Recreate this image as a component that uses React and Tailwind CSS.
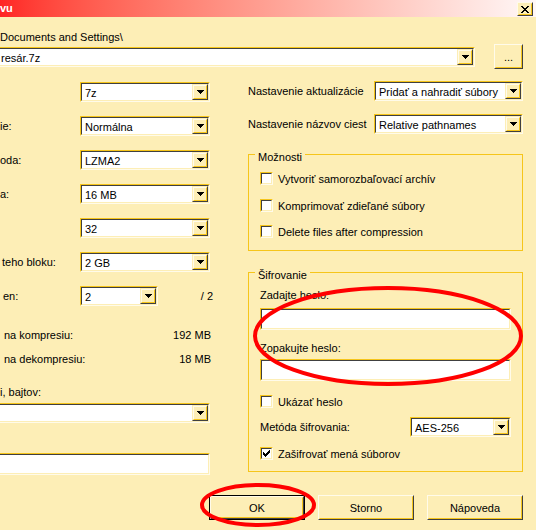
import React from "react";

const box1 =
  "border border-t-[#f6c51a] border-l-[#f6c51a] border-b-[#fffbea] border-r-[#fffbea]";
const box2 =
  "border border-t-[#404040] border-l-[#404040] border-b-[#fdeeb6] border-r-[#fdeeb6]";
const raise1 =
  "border border-t-[#fdeeb6] border-l-[#fdeeb6] border-b-[#404040] border-r-[#404040]";
const raise2 =
  "border border-t-[#fffbea] border-l-[#fffbea] border-b-[#f6c51a] border-r-[#f6c51a]";

function Sunken({ className = "", children }) {
  return (
    <div className={`${box1} ${className}`}>
      <div className={`${box2} bg-white h-full w-full flex items-center justify-center`}>
        {children}
      </div>
    </div>
  );
}

function Arrow() {
  return (
    <svg width="7" height="4" viewBox="0 0 7 4" shapeRendering="crispEdges">
      <rect x="0" y="0" width="7" height="1" fill="#000" />
      <rect x="1" y="1" width="5" height="1" fill="#000" />
      <rect x="2" y="2" width="3" height="1" fill="#000" />
      <rect x="3" y="3" width="1" height="1" fill="#000" />
    </svg>
  );
}

function DropBtn() {
  return (
    <div className={`${raise1} h-full w-[16px] shrink-0`}>
      <div className={`${raise2} h-full w-full bg-[#fdeeb6] flex items-center justify-center`}>
        <Arrow />
      </div>
    </div>
  );
}

function Combo({ text, className = "" }) {
  return (
    <Sunken className={className}>
      <div className="flex-1 min-w-0 h-full pl-[3px] pt-[2px] flex items-center whitespace-nowrap overflow-hidden">
        {text}
      </div>
      <DropBtn />
    </Sunken>
  );
}

function CheckMark() {
  const px = [
    [6, 0, 1],
    [5, 1, 2],
    [0, 2, 1],
    [4, 2, 3],
    [0, 3, 2],
    [3, 3, 3],
    [0, 4, 5],
    [1, 5, 3],
    [2, 6, 1],
  ];
  return (
    <svg width="7" height="7" viewBox="0 0 7 7" shapeRendering="crispEdges">
      {px.map(([x, y, w], i) => (
        <rect key={i} x={x} y={y} width={w} height="1" fill="#000" />
      ))}
    </svg>
  );
}

function CheckRow({ label, checked = false, className = "" }) {
  return (
    <div className={`h-[13px] flex items-center whitespace-nowrap ${className}`}>
      <Sunken className="w-[13px] h-[13px] shrink-0">{checked && <CheckMark />}</Sunken>
      <span className="ml-[5px]">{label}</span>
    </div>
  );
}

function Btn({ children, className = "", def = false }) {
  const core = (
    <div className="h-full w-full bg-[#fdeeb6] border border-t-[#fffbea] border-l-[#fffbea] border-b-[#404040] border-r-[#404040]">
      <div className="h-full w-full border border-t-[#fdeeb6] border-l-[#fdeeb6] border-b-[#f6c51a] border-r-[#f6c51a] flex items-center justify-center">
        {children}
      </div>
    </div>
  );
  return def ? (
    <div className={`border border-black ${className}`}>{core}</div>
  ) : (
    <div className={className}>{core}</div>
  );
}

function Group({ title, className = "", children }) {
  return (
    <fieldset className={`border border-[#f6c51a] p-0 m-0 ${className}`}>
      <legend className="ml-[6px] px-[3px] pt-[5px] leading-[14px]">{title}</legend>
      {children}
    </fieldset>
  );
}

export default function App() {
  const rows = [
    ["", "", "7z"],
    ["ie:", "pl-0", "Normálna"],
    ["oda:", "pl-0", "LZMA2"],
    ["a:", "pl-0", "16 MB"],
    ["", "", "32"],
    ["teho bloku:", "pl-[2px]", "2 GB"],
  ];

  return (
    <div className="relative w-[536px] h-[530px] overflow-hidden bg-[#fdeeb6] text-black font-['Liberation_Sans',Arial,sans-serif] text-[11px] leading-[14px]">
      {/* title bar */}
      <div className="h-[17px] flex items-start bg-linear-to-r from-[#ff2424] to-[#fff8f8]">
        <div className="pt-[2px] font-bold text-white leading-[13px]">vu</div>
        <div className="ml-auto mr-[3px] mt-[2px] w-[16px] h-[14px]">
          <Btn className="w-full h-full">
            <svg width="8" height="7" viewBox="0 0 8 7" shapeRendering="crispEdges">
              <path d="M0.5 0 L7.5 7 M7.5 0 L0.5 7" stroke="#000" strokeWidth="2" />
            </svg>
          </Btn>
        </div>
      </div>

      {/* path */}
      <div className="mt-[14px] h-[13px] leading-[13px] whitespace-nowrap">Documents and Settings\</div>
      <div className="flex items-center h-[25px]">
        <Combo text="resár.7z" className="ml-[-4px] w-[479px] h-[20px] shrink-0" />
        <Btn className="ml-[19px] w-[29px] h-[25px] shrink-0">...</Btn>
      </div>

      {/* columns */}
      <div className="flex items-start">
        {/* left column */}
        <div className="w-[214px] pt-[13px] flex flex-col shrink-0">
          {rows.map(([l, pl, v], i) => (
            <div key={i} className="h-[34px] flex items-start">
              <div className={`w-[80px] h-[20px] flex items-center whitespace-nowrap ${pl}`}>{l}</div>
              <Combo text={v} className="w-[130px] h-[20px]" />
            </div>
          ))}
          <div className="h-[20px] flex items-center">
            <div className="w-[80px] pl-[3px]">en:</div>
            <Combo text="2" className="w-[78px] h-[20px]" />
            <div className="flex-1 text-right pr-[1px]">/ 2</div>
          </div>
          <div className="mt-[22px] flex justify-between whitespace-nowrap">
            <span className="pl-[4px]">na kompresiu:</span>
            <span className="pr-[3px]">192 MB</span>
          </div>
          <div className="mt-[10px] flex justify-between whitespace-nowrap">
            <span className="pl-[4px]">na dekompresiu:</span>
            <span className="pr-[3px]">18 MB</span>
          </div>
          <div className="mt-[19px] whitespace-nowrap">i, bajtov:</div>
          <Combo text="" className="mt-[4px] ml-[-4px] w-[214px] h-[20px]" />
          <Sunken className="mt-[30px] ml-[-4px] w-[214px] h-[22px]" />
        </div>

        {/* right column */}
        <div className="ml-[34px] w-[275px] pt-[12px] flex flex-col shrink-0">
          <div className="h-[20px] flex items-center whitespace-nowrap">
            <span>Nastavenie aktualizácie</span>
            <Combo text="Pridať a nahradiť súbory" className="ml-auto w-[149px] h-[20px]" />
          </div>
          <div className="mt-[13px] h-[20px] flex items-center whitespace-nowrap">
            <span>Nastavenie názvov ciest</span>
            <Combo text="Relative pathnames" className="ml-auto w-[149px] h-[20px]" />
          </div>

          <Group title="Možnosti" className="mt-[11px]">
            <div className="px-[11px] pb-[12px] flex flex-col">
              <CheckRow className="mt-[8px]" label="Vytvoriť samorozbaľovací archív" />
              <CheckRow className="mt-[14px]" label="Komprimovať zdieľané súbory" />
              <CheckRow className="mt-[13px]" label="Delete files after compression" />
            </div>
          </Group>

          <Group title="Šifrovanie" className="mt-[12px]">
            <div className="px-[11px] pb-[11px] flex flex-col">
              <div className="mt-[6px]">Zadajte heslo:</div>
              <Sunken className="mt-[6px] w-full h-[22px]" />
              <div className="mt-[11px]">Zopakujte heslo:</div>
              <Sunken className="mt-[4px] w-full h-[22px]" />
              <CheckRow className="mt-[14px]" label="Ukázať heslo" />
              <div className="mt-[9px] h-[20px] flex items-center whitespace-nowrap">
                <span>Metóda šifrovania:</span>
                <Combo text="AES-256" className="ml-auto w-[101px] h-[20px]" />
              </div>
              <CheckRow className="mt-[10px]" label="Zašifrovať mená súborov" checked />
            </div>
          </Group>
        </div>
      </div>

      {/* buttons */}
      <div className="mt-[20px] flex justify-end gap-[13px] pr-[13px]">
        <Btn def className="w-[96px] h-[25px]">OK</Btn>
        <Btn className="w-[96px] h-[25px]">Storno</Btn>
        <Btn className="w-[96px] h-[25px]">Nápoveda</Btn>
      </div>

      {/* red annotation ellipses */}
      <svg className="absolute left-0 top-0 pointer-events-none" width="536" height="530">
        <ellipse cx="388" cy="336" rx="133" ry="48" fill="none" stroke="#ff0000" strokeWidth="4" />
        <ellipse cx="258" cy="505" rx="56" ry="20" fill="none" stroke="#ff0000" strokeWidth="4" />
      </svg>
    </div>
  );
}
